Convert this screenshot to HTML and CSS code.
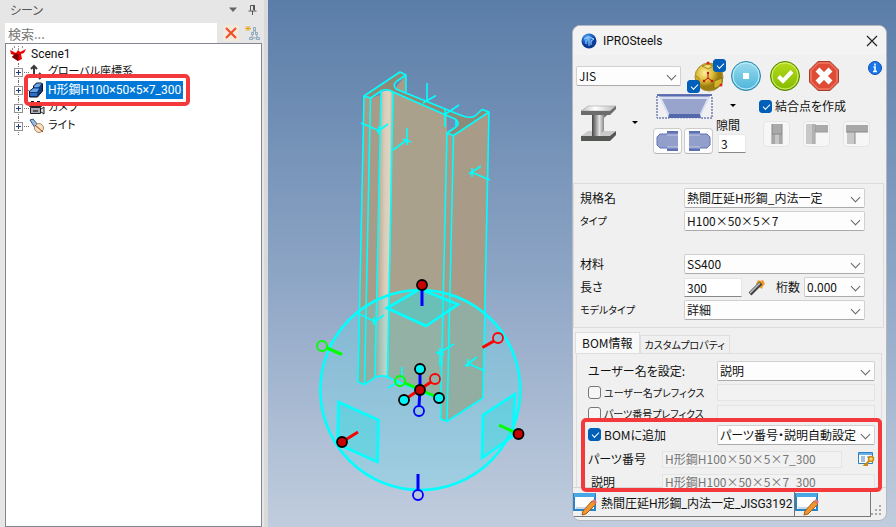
FILE: index.html
```
<!DOCTYPE html>
<html lang="ja">
<head>
<meta charset="utf-8">
<title>IPROSteels</title>
<link rel="stylesheet" href="styles.css">
</head>
<body>
<main class="app">
  <aside class="scene-panel">
    <header class="scene-head">
      <h1 class="scene-title">シーン</h1>
      <button class="bare" aria-label="メニュー"><svg width="10" height="6"><path d="M1 0.500h8L5 5z" fill="#666"/></svg></button>
      <button class="bare" aria-label="ピン留め"><svg width="9" height="12" fill="none" stroke="#555"><path d="M2.500 6.500V1.500h4v5M0.500 7h8M4.500 7v4"/><path d="M6 1v5" stroke-width="2"/></svg></button>
    </header>
    <div class="search-row">
      <input class="search" type="text" placeholder="検索..." aria-label="検索">
      <button class="clear" aria-label="クリア"><svg width="12" height="12"><path d="M1 1l10 10M11 1L1 11" stroke="#f04a26" stroke-width="2"/></svg></button>
      <button class="bare" aria-label="ツリー"><svg width="15" height="16" fill="none"><path d="M3 1v5M0 3.500h6M1 1.500l4 4M5 1.500l-4 4" stroke="#e6a91f"/><path d="M9.500 4l-3 9M9.500 4l3 9M7 13h6" stroke="#8fa3b3"/><path d="M8.500 2.500h2v3h-2zM6.500 7.500h2v2h-2zM10.500 7.500h2v2h-2zM4.500 12.500h3v2h-3zM11.500 12.500h3v2h-3z" fill="#d7e6ee" stroke="#8ea9b9"/></svg></button>
    </div>
    <ul class="tree">
      <li class="root"><svg width="18" height="16"><path d="M1 4l6 3 2-3 2 2 6-3-2 4-3 1 1 5-4 2-6-4 2-2-3-1z" fill="#e00"/><path d="M7 7l3 2-1 6-6-4 2-2z" fill="#700"/><path d="M5 1h1M9 0h1M13 1h1M3 3h1M9 3h1" stroke="#222"/></svg><span class="name">Scene1</span></li>
      <li class="leaf"><button class="plus" aria-label="展開"></button><svg width="18" height="16" fill="none" stroke="#3c3c3c" stroke-width="2"><path d="M6 13V3M3 5l3-3 3 3M5 12h9M11 9l3 3-3 3"/></svg><span class="name">グローバル座標系</span></li>
      <li class="leaf"><button class="plus" aria-label="展開"></button><svg width="18" height="16"><path d="M1.500 9l4-3V4l3-3h5l1 1v7l-5 6h-8z" fill="#123a78" stroke="#04132f"/><path d="M6 4l3-2.500h4.500L11 5H6zM2 9l3.500-2.500H11L9 10H2z" fill="#67a4e8"/><path d="M2 11h7v3H2zM6 5.500h4v1.500H6z" fill="#2f6fc6"/></svg><span class="name selected">H形鋼H100×50×5×7_300</span></li>
      <li class="leaf"><button class="plus" aria-label="展開"></button><svg width="18" height="16"><path d="M3 1h3v2H3zM9 1h3v2H9z" fill="#111"/><path d="M1.500 4.500h12v2h-12zM2.500 7.500h10v6h-10z" fill="#aaa9bd" stroke="#222"/><path d="M13 9l3-2v7l-3-2" fill="#ddd" stroke="#222"/><path d="M5 10h5v2H5z" fill="#555"/></svg><span class="name">カメラ</span></li>
      <li class="leaf"><button class="plus" aria-label="展開"></button><svg width="18" height="16"><path d="M2 2l3-1 5 6-3 3z" fill="#9dbbe0" stroke="#34588c"/><circle cx="11" cy="10" r="4.500" fill="#f5e3bd" stroke="#a58b68"/><path d="M7 7l8 7" stroke="#a22"/></svg><span class="name">ライト</span></li>
      <li class="mark mark-tree" aria-hidden="true"></li>
    </ul>
  </aside>

  <section class="viewport">
    <svg class="model" width="628" height="527" viewBox="268 0 628 527" fill="none">
      <defs>
        <linearGradient id="fillet"><stop offset="0" stop-color="#a99b88"/><stop offset=".55" stop-color="#d9ceb9"/><stop offset=".8" stop-color="#dfd4bf"/><stop offset="1" stop-color="#b8ae9a"/></linearGradient>
      </defs>
      <path d="M364 96L371 98 393 91 406 75V100L397 382 387 377 375 377 364 384 358 382z" fill="#a89b88"/>
      <path d="M393 91L447 116 447 402 388 377z" fill="#aaa18d"/>
      <path d="M381 92Q387 89 393 92L388 378Q381 375 375 377z" fill="url(#fillet)"/>
      <path d="M447 133L489 111 483 398 447 421.500 440.500 419z" fill="#a89b88"/>
      <path d="M364 96L400 72 406 75 397 81Q392 85 396 89L460 115Q470 119 475 116L482 109.500 489 112 453.500 135.500 447 133 456 127Q461 123 455 119L393 92Q387 88 381 91L370.500 98z" fill="#8d8a7a"/>
      <circle cx="420.300" cy="390" r="100" fill="#50e6f5" fill-opacity=".24"/>
      <g stroke="#00ffff" stroke-width="1.600" stroke-linejoin="round">
        <path d="M364 96L400 72 406 75 397 81Q392 85 396 89L460 115Q470 119 475 116L482 109.500 489 112 453.500 135.500 447 133 456 127Q461 123 455 119L393 92Q387 88 381 91L370.500 98zM406 75V92M456 119V126"/>
        <path d="M364 96L358 382 364.500 384.500 375 377.500Q382 374 390 378L440 400M370.500 98L364.500 384M381 92L375 377M393 92L387.500 377M447 133L440.500 419 447 421.500 483 398 489 112M453.500 135.500L447 421.500"/>
        <path d="M427 83V102M423 103L436 95.500M445 109V127M444 115L459 105M361 123L380 131M377 132L388 124M379 126V135M407 128V145M393 150L408 139M403 139L411 142M469 174L481 166M471 172L490 180M472 168V177M357 313L376 322M373 323L384 315M374 317V325M436 352L444 354M437 354L454 344M440 348V366M465 366L477 357M467 363L485 371M468 359V367M402 367V380M388 388L400 381"/>
      </g>
      <g stroke="#00ffff" stroke-width="2.600">
        <circle cx="420.300" cy="390" r="100"/>
        <g fill="#00e5e5" fill-opacity=".28"><path d="M387 308L420 289 458 304.500 426 326z"/><path d="M338.500 402L378.500 420 377.500 462 337.500 444z"/><path d="M515 394L483 415 482 458 513 436z"/></g>
      </g>
      <g stroke-width="3">
        <path d="M422 285V306M418 474V490M420 369V390L419 406" stroke="#0000ff"/>
        <path d="M327 348L342 354.500M518 434L499 425M405 383L439 398" stroke="#00ff00"/>
        <path d="M494 341L482.500 347.500M342 442L358 432M431 382L404 400" stroke="#ff0000"/>
      </g>
      <g stroke-width="1.800">
        <circle cx="322" cy="346" r="5" stroke="#00ff00"/><circle cx="400" cy="381" r="5" stroke="#00ff00"/>
        <circle cx="498" cy="338" r="5" stroke="#ff0000"/><circle cx="435" cy="379" r="5" stroke="#ff0000"/>
        <circle cx="418" cy="495" r="5" stroke="#0000ff"/><circle cx="419" cy="411" r="5" stroke="#0000ff"/>
        <g fill="#00f4f4" stroke="#000"><circle cx="420" cy="369" r="5"/><circle cx="439" cy="398" r="5"/><circle cx="404" cy="400" r="5"/></g>
        <g fill="#c80000" stroke="#000"><circle cx="422" cy="285" r="5"/><circle cx="342" cy="442" r="5"/><circle cx="518.500" cy="434" r="5"/><circle cx="420" cy="390" r="5"/></g>
      </g>
    </svg>

    <section class="dialog">
      <header class="titlebar">
        <svg width="16" height="16"><defs><radialGradient id="orb" cx=".4" cy=".3"><stop offset="0" stop-color="#86c6ff"/><stop offset=".6" stop-color="#1c68cf"/><stop offset="1" stop-color="#0c3b94"/></radialGradient></defs><circle cx="8" cy="8" r="7.500" fill="url(#orb)"/><path d="M3 6l5-2 5 2-3 2v4M5 7v4M8 6v7" stroke="#9fd0ff" fill="none"/></svg>
        <h2 class="dialog-title">IPROSteels</h2>
        <button class="bare" aria-label="閉じる"><svg width="12" height="12"><path d="M1 1l10 10M11 1L1 11" stroke="#222" stroke-width="1.200"/></svg></button>
      </header>

      <div class="tools">
        <div class="tool-top">
          <span class="select std"><select aria-label="規格"><option>JIS</option></select></span>
          <span class="ball">
            <svg width="40" height="34"><defs><radialGradient id="gold" cx=".35" cy=".35"><stop offset="0" stop-color="#fff1a0"/><stop offset=".6" stop-color="#dcb933"/><stop offset="1" stop-color="#9b7d12"/></radialGradient></defs><circle cx="22" cy="18" r="14" fill="url(#gold)" stroke="#a98f3c"/><path d="M15 7l6-2 5 2-5 3z" fill="#f0da6c" stroke="#a58a22"/><path d="M27 22l8-3v6l-6 4h-2z" fill="#d6b52c" stroke="#8d7218"/><path d="M9 17l3 2v6" fill="none" stroke="#a58a22"/><path d="M21 14v5l-4 3M21 19l4 3" stroke="#b01010" fill="none"/><circle cx="21" cy="4" r="1.500" fill="#d22"/><circle cx="34" cy="26" r="1.500" fill="#d22"/><circle cx="21" cy="14" r="1.200" fill="#c11"/><circle cx="17" cy="22" r="1.200" fill="#c11"/><circle cx="25" cy="22" r="1.200" fill="#c11"/></svg>
            <input class="check ball-a" type="checkbox" checked aria-label="上"><input class="check ball-b" type="checkbox" checked aria-label="下">
          </span>
          <button class="bare round" aria-label="停止"><svg width="32" height="32"><defs><linearGradient id="blu" x2="0" y2="1"><stop offset="0" stop-color="#9bdcf0"/><stop offset="1" stop-color="#4cb4d8"/></linearGradient></defs><circle cx="16" cy="16" r="14.500" fill="url(#blu)" stroke="#2786ad"/><circle cx="16" cy="16" r="13" stroke="#c5edf8" fill="none"/><path d="M13 13h6v6h-6z" fill="#fff"/></svg></button>
          <button class="bare round" aria-label="OK"><svg width="32" height="32"><defs><linearGradient id="grn" x2="0" y2="1"><stop offset="0" stop-color="#b6dc1b"/><stop offset="1" stop-color="#83ba00"/></linearGradient></defs><circle cx="16" cy="16" r="14.500" fill="url(#grn)" stroke="#548500"/><circle cx="16" cy="16" r="13" stroke="#d3ef79" fill="none"/><path d="M9.500 16.500l4.500 4.500L23 11.500" stroke="#fff" stroke-width="4" fill="none"/></svg></button>
          <button class="bare round" aria-label="キャンセル"><svg width="32" height="32"><path d="M10 1.500h12L30.500 10v12L22 30.500H10L1.500 22V10z" fill="#de4c36" stroke="#a83a28"/><path d="M10.500 3h11L29 10.500v11L21.500 29h-11L3 21.500v-11z" stroke="#f59080" fill="none"/><path d="M9.500 9.500l13 13M22.500 9.500l-13 13" stroke="#fff" stroke-width="5.500"/></svg></button>
          <button class="bare info" aria-label="情報"><svg width="16" height="16"><circle cx="8" cy="8" r="6.500" fill="#1976e8" stroke="#0a50b8"/><path d="M8 3.500v2M6.500 7H8v4.500M6 11.500h4" stroke="#fff" stroke-width="1.600" fill="none"/></svg></button>
        </div>
        <div class="tool-main">
          <button class="bare steel" aria-label="形鋼">
            <svg width="40" height="40"><defs><linearGradient id="stl"><stop offset="0" stop-color="#444"/><stop offset=".5" stop-color="#e4e4e4"/><stop offset="1" stop-color="#4a4a4a"/></linearGradient><linearGradient id="stt"><stop offset="0" stop-color="#bbb"/><stop offset=".4" stop-color="#fff"/><stop offset="1" stop-color="#bbb"/></linearGradient></defs><path d="M2 8L9 3h28l-6 5z" fill="url(#stt)" stroke="#999" stroke-width=".5"/><path d="M2 8h29l6-5v3l-6 6H2z" fill="#6b6d6b"/><path d="M13 12h15l-3 3v13l-4 5h-8z" fill="url(#stl)"/><path d="M2 33l7-5h4v5h8l4-5h12l-6 6H2z" fill="#c9cac9"/><path d="M2 33h29l6-5v4l-6 6H2z" fill="#555755"/></svg>
            <svg width="6" height="4"><path d="M0 0h6L3 3z"/></svg>
          </button>
          <div class="shapes">
            <button class="bare" aria-label="端部"><svg width="57" height="26"><path d="M1 2v22h55V2" stroke="#33479b" stroke-dasharray="2 1" fill="none"/><path d="M2 1h53L44 24H13z" fill="#98a4cb" stroke="#fff"/><path d="M1 1h55" stroke="#33479b" stroke-width="1.500"/><path d="M5 4h47M4 3l9 19M53 3l-9 19" stroke="#d9dff2" stroke-width="2"/><path d="M12 24l1-4h31l1 4z" fill="#5367ab"/></svg></button>
            <div class="pair">
              <button class="tile" aria-label="左端"><svg width="26" height="22"><path d="M5 4h7V1h11v20H12v-3H5l-3-3V7z" fill="#929fca"/><path d="M23 4H5L2 7v8l3 3h18" fill="none" stroke="#6073b6"/><path d="M12 2h11M12 20h11" stroke="#5d70b3" stroke-width="2"/><path d="M12 5h11M12 17h11" stroke="#c5cce6"/></svg></button>
              <button class="tile" aria-label="右端"><svg width="26" height="22"><path d="M21 4h-7V1H3v20h11v-3h7l3-3V7z" fill="#929fca"/><path d="M3 4h18l3 3v8l-3 3H3" fill="none" stroke="#6073b6"/><path d="M14 2H3M14 20H3" stroke="#5d70b3" stroke-width="2"/><path d="M14 5H3M14 17H3" stroke="#c5cce6"/></svg></button>
            </div>
          </div>
          <div class="clearance">
            <button class="bare drop" aria-label="一覧"><svg width="6" height="4"><path d="M0 0h6L3 3z"/></svg></button>
            <label for="gap">隙間</label>
            <input id="gap" class="field" type="text" value="3">
          </div>
          <div class="joints">
            <label class="tick"><input class="check" type="checkbox" checked>結合点を作成</label>
            <div class="joint-row">
              <button class="tile off" disabled aria-label="突合せ"><svg width="24" height="22"><path d="M7 1h10v20H7z" fill="#c6c6c6"/><path d="M7 1h10v10H7z" fill="#aaa"/><path d="M7 1v20M17 1v20M7 11h10M9 11v10M15 11v10" stroke="#888"/></svg></button>
              <button class="tile off" disabled aria-label="縦通し"><svg width="24" height="22"><path d="M1 1h9v20H1z" fill="#c8c8c8"/><path d="M10 2h13v7H10z" fill="#aaa"/><path d="M10 1v20M10 9h13M8 1v20" stroke="#999"/></svg></button>
              <button class="tile off" disabled aria-label="横通し"><svg width="24" height="22"><path d="M1 2h22v7H1z" fill="#a8a8a8"/><path d="M2 9h8v12H2z" fill="#c8c8c8"/><path d="M1 9h22M10 9v12" stroke="#888"/></svg></button>
            </div>
          </div>
        </div>
      </div>

      <div class="params">
        <label for="p-std">規格名</label><span class="select"><select id="p-std"><option>熱間圧延H形鋼_内法一定</option></select></span>
        <label for="p-type" class="kana">タイプ</label><span class="select"><select id="p-type"><option>H100×50×5×7</option></select></span>
        <label for="p-mat" class="after-gap">材料</label><span class="select after-gap"><select id="p-mat"><option>SS400</option></select></span>
        <label for="p-len">長さ</label>
        <div class="length">
          <input id="p-len" class="field" type="text" value="300">
          <button class="bare" aria-label="計測"><svg width="18" height="17"><path d="M8 5l2-4 2 1 3-1 1 2 1 2-2 2-1 3-3-2z" fill="#f39a24"/><path d="M2 15L13 4" stroke="#444" stroke-width="4"/><path d="M2 14L12 4" stroke="#c2c8ce" stroke-width="1.500"/></svg></button>
          <label for="p-dig">桁数</label>
          <span class="select"><select id="p-dig"><option>0.000</option></select></span>
        </div>
        <label for="p-model" class="kana">モデルタイプ</label><span class="select"><select id="p-model"><option>詳細</option></select></span>
      </div>

      <nav class="tabs"><button class="tab active">BOM情報</button><button class="tab kana">カスタムプロパティ</button></nav>
      <div class="sheet">
        <div class="row"><label for="b-user">ユーザー名を設定:</label><span class="select"><select id="b-user"><option>説明</option></select></span></div>
        <div class="row"><label class="tick kana"><input class="check" type="checkbox">ユーザー名プレフィクス</label><input class="field off" type="text" disabled aria-label="ユーザー名プレフィクス"></div>
        <div class="row"><label class="tick kana"><input class="check" type="checkbox">パーツ番号プレフィクス</label><input class="field off" type="text" disabled aria-label="パーツ番号プレフィクス"></div>
        <div class="bom">
          <div class="row"><label class="tick"><input class="check" type="checkbox" checked>BOMに追加</label><span class="select"><select aria-label="BOM設定"><option>パーツ番号・説明自動設定</option></select></span></div>
          <div class="row part"><label for="b-no">パーツ番号</label><input id="b-no" class="field off" type="text" disabled value="H形鋼H100×50×5×7_300"><button class="bare" aria-label="番号設定"><svg width="17" height="16"><path d="M.500 1.500h14v11H.500z" fill="#fff" stroke="#2f7fc1"/><path d="M1 2h13v2H1z" fill="#67b0e6"/><path d="M3 6h4M3 8h4M3 10h4M9 6h3" stroke="#4a82b8"/><circle cx="13" cy="8" r="2.500" fill="#f6d27a" stroke="#c98a18" stroke-width="1.500"/><path d="M11 10l-4 4h3" stroke="#c98a18" stroke-width="2" fill="none"/></svg></button></div>
          <div class="row desc"><label for="b-desc">説明</label><input id="b-desc" class="field off" type="text" disabled value="H形鋼H100×50×5×7_300"></div>
          <div class="mark mark-bom" aria-hidden="true"></div>
        </div>
      </div>
      <footer class="status">
        <button class="status-item wide"><svg width="24" height="24"><path d="M1 2h21v16H1z" fill="#fff" stroke="#2784c6" stroke-width="2"/><path d="M1 1h21v4H1z" fill="#49a7e4"/><path d="M3 15h17v2H3z" fill="#c9dbea"/><path d="M10 19l9-10 4 3-10 10-4 1z" fill="#f0962e" stroke="#a45b16"/><path d="M19 9l2-2 3 3-2 2z" fill="#e47878"/></svg><span>熱間圧延H形鋼_内法一定_JISG3192</span></button>
        <button class="status-item" aria-label="編集"><svg width="24" height="24"><path d="M1 2h21v16H1z" fill="#fff" stroke="#2784c6" stroke-width="2"/><path d="M1 1h21v4H1z" fill="#49a7e4"/><path d="M3 15h17v2H3z" fill="#c9dbea"/><path d="M10 19l9-10 4 3-10 10-4 1z" fill="#f0962e" stroke="#a45b16"/><path d="M19 9l2-2 3 3-2 2z" fill="#e47878"/></svg></button>
        <svg class="grip" width="12" height="12" fill="#aaa"><path d="M8 0h2v2H8zM4 4h2v2H4zM8 4h2v2H8zM0 8h2v2H0zM4 8h2v2H4zM8 8h2v2H8z"/></svg>
      </footer>
    </section>
  </section>
</main>
</body>
</html>
```
FILE: styles.css
```
* { box-sizing: border-box; }
body { margin: 0; }
body, button, input, select {
  font-family: "Noto Sans CJK JP", sans-serif;
  font-size: 12px;
  line-height: 18px;
  color: #111;
}
button, input, select { margin: 0; padding: 0; }
svg { display: block; flex: none; }
h1, h2 { margin: 0; font-weight: 400; }

.app { display: flex; height: 100vh; overflow: hidden; }

.bare {
  display: flex;
  align-items: center;
  border: 0;
  background: none;
}

/* scene browser */
.scene-panel {
  flex: 0 0 268px;
  display: flex;
  flex-direction: column;
  padding: 0 2px 0 5px;
  background: #e6e6e6;
  border-right: 4px solid #dadada;
}
.scene-head {
  display: flex;
  align-items: center;
  gap: 10px;
  height: 23px;
  padding: 0 5px 4px;
}
.scene-title { flex: 1; font-size: 12px; color: #555; font-feature-settings: "palt"; }
.search-row { display: flex; align-items: center; gap: 6px; height: 20px; padding-right: 2px; }
.search {
  flex: 1;
  min-width: 0;
  height: 20px;
  padding: 0 3px;
  border: 0;
  background: #fff;
  font-size: 13px;
}
.search::placeholder { color: #777; }
.clear {
  display: flex;
  align-items: center;
  justify-content: center;
  width: 16px;
  height: 16px;
  border: 0;
  background: #f3e9db;
}

.tree {
  position: relative;
  flex: 1;
  margin: 0;
  padding: 1px 3px;
  list-style: none;
  background: #fff;
  border: 1px solid #828790;
}
.tree li { display: flex; align-items: center; }
.root, .leaf { height: 18px; font-family: Roboto, "Noto Sans CJK JP", sans-serif; }
.root { gap: 4px; }
.name { font-size: 12px; line-height: 18px; font-feature-settings: "palt"; }
.leaf .name { padding: 0 2px; font-size: 11px; }
.leaf .selected { font-size: 12px; background: #0078d7; color: #fff; }
.leaf {
  position: relative;
  padding-left: 5px;
}
.leaf::before {
  content: "";
  position: absolute;
  left: 9px;
  top: 0;
  height: 18px;
  border-left: 1px dotted #777;
}
.leaf svg { margin-left: 5px; }
.plus {
  position: relative;
  width: 9px;
  height: 9px;
  border: 1px solid #919191;
  background:
    linear-gradient(#204080, #204080) center / 5px 1px no-repeat,
    linear-gradient(#204080, #204080) center / 1px 5px no-repeat,
    #fff;
}
.plus::after {
  content: "";
  position: absolute;
  left: 9px;
  top: 3px;
  width: 5px;
  border-top: 1px dotted #777;
}

.mark {
  position: absolute;
  border: 4px solid #f4393c;
  border-radius: 5px;
  pointer-events: none;
}
.mark-tree { left: 18px; top: 30px; width: 166px; height: 32px; }
.mark-bom { inset: -6px -7px -5px; }

/* 3D view */
.viewport {
  position: relative;
  flex: 1;
  min-width: 0;
  background: linear-gradient(#5a7da8, #8da5c5 52%, #c1cdde);
}

/* floating window */
.dialog {
  position: absolute;
  top: 25px;
  right: 9px;
  width: 315px;
  overflow: hidden;
  background: #f0f0f0;
  border: 1px solid #b4b8be;
  border-radius: 8px;
  font-feature-settings: "palt";
}
.dialog input, .dialog select, .dialog button { font-feature-settings: "palt"; }
.dialog .kana { font-size: 10px; white-space: nowrap; }
.titlebar {
  display: flex;
  align-items: center;
  gap: 6px;
  height: 29px;
  padding: 0 8px;
  background: #f3f3f3;
}
.dialog-title { flex: 1; font-family: Roboto, sans-serif; font-size: 12px; }

.select { position: relative; display: block; min-width: 0; }
.select::after {
  content: "";
  position: absolute;
  right: 6px;
  top: 6px;
  width: 6px;
  height: 6px;
  border: solid #666;
  border-width: 0 1px 1px 0;
  transform: rotate(45deg);
  pointer-events: none;
}
.select select {
  display: block;
  appearance: none;
  width: 100%;
  height: 20px;
  padding: 0 2px;
  border: 1px solid #d0d0d0;
  border-bottom-color: #aaa;
  border-radius: 2px;
  background: #fdfdfd;
}
.field {
  min-width: 0;
  height: 19px;
  padding: 0 2px;
  border: 1px solid #e6e6e6;
  border-bottom-color: #888;
  background: #fff;
}
.field.off {
  height: 17px;
  border-color: #e4e4e4;
  background: #f2f2f2;
  color: #777;
}
.check {
  appearance: none;
  position: relative;
  flex: none;
  width: 13px;
  height: 13px;
  border: 1px solid #777;
  border-radius: 3px;
  background: #f6f6f6;
}
.check:checked { border-color: #005fb8; background: #005fb8; }
.check:checked::after {
  content: "";
  position: absolute;
  left: 3px;
  top: 3px;
  width: 6px;
  height: 3px;
  border: solid #fff;
  border-width: 0 0 1px 1px;
  transform: rotate(-45deg);
}
.tick { display: flex; align-items: center; gap: 3px; white-space: nowrap; }

/* tool area */
.tools { height: 128px; padding: 4px 3px 0; }
.tool-top { display: flex; align-items: center; height: 34px; }
.std { width: 105px; }
.ball { position: relative; margin: 0 3px 0 6px; }
.ball .ball-a { position: absolute; right: 1px; top: 0; }
.ball .ball-b { position: absolute; left: 0; bottom: 0; }
.round { margin-right: 7px; }
.info { margin: 0 0 16px auto; }
.tool-main { display: flex; align-items: flex-start; }
.steel { gap: 13px; width: 77px; padding: 10px 0 0 3px; }
.shapes { width: 60px; padding: 1px 0 0 3px; }
.pair { display: flex; gap: 2px; margin: 8px 0 0 -3px; }
.tile {
  display: flex;
  align-items: center;
  justify-content: center;
  width: 29px;
  height: 26px;
  border: 1px solid #ccc;
  border-bottom-color: #b5b5b5;
  border-radius: 4px;
  background: #fdfdfd;
}
.tile.off { width: 27px; border-color: #e5e5e5; background: #f6f6f6; }
.clearance {
  display: flex;
  flex-direction: column;
  width: 46px;
  padding: 11px 0 0 3px;
}
.clearance .drop { height: 4px; margin-left: 14px; }
.clearance label { margin-top: 8px; }
.clearance .field { width: 28px; margin-left: 2px; }
.joints { padding-top: 4px; }
.joint-row { display: flex; gap: 13px; padding: 6px 0 0 4px; }

/* parameters */
.params {
  display: grid;
  grid-template-columns: 104px 1fr;
  row-gap: 3px;
  align-items: center;
  margin-right: 2px;
  padding: 4px 18px 7px 6px;
  border: 1px solid #dcdcdc;
}
.after-gap { margin-top: 20px; }
.length { display: flex; align-items: center; }
.length .field { width: 58px; }
.length .bare { margin: 0 10px 0 6px; }
.length .select { flex: 1; margin-left: 4px; }

/* tabs */
.tabs { display: flex; align-items: flex-end; padding: 4px 2px 0; }
.tab {
  height: 18px;
  padding: 0 4px;
  border: 1px solid #dedede;
  border-bottom: 0;
  background: #f0f0f0;
}
.tab.active { height: 21px; padding: 0 6px; background: #f9f9f9; }
.sheet {
  margin: 0 4px 0 3px;
  padding: 6px 6px 0 11px;
  border: 1px solid #dedede;
  border-bottom: 0;
}
.row {
  display: grid;
  grid-template-columns: 129px 1fr;
  align-items: center;
  height: 21px;
}
.row:first-child { height: 22px; }
.bom { position: relative; }
.bom .row { height: 21px; }
.bom .part { grid-template-columns: 74px 1fr 17px; height: 28px; }
.bom .part .field { margin-right: 16px; }
.bom .part .bare { margin-right: 4px; }
.bom .desc { grid-template-columns: 74px 1fr; height: 14px; }
.desc label { padding-left: 3px; }

.status {
  display: flex;
  align-items: flex-end;
  height: 33px;
  padding: 0 3px 3px 0;
  border-top: 1px solid #d6d6d6;
}
.status-item {
  display: flex;
  align-items: center;
  gap: 4px;
  width: 76px;
  height: 25px;
  border: solid #777;
  border-width: 0 1px 1px 0;
  background: #f0f0f0;
  font-family: Roboto, "Noto Sans CJK JP", sans-serif;
}
.status-item.wide { width: 223px; white-space: nowrap; }
.grip { margin-left: auto; }
```
